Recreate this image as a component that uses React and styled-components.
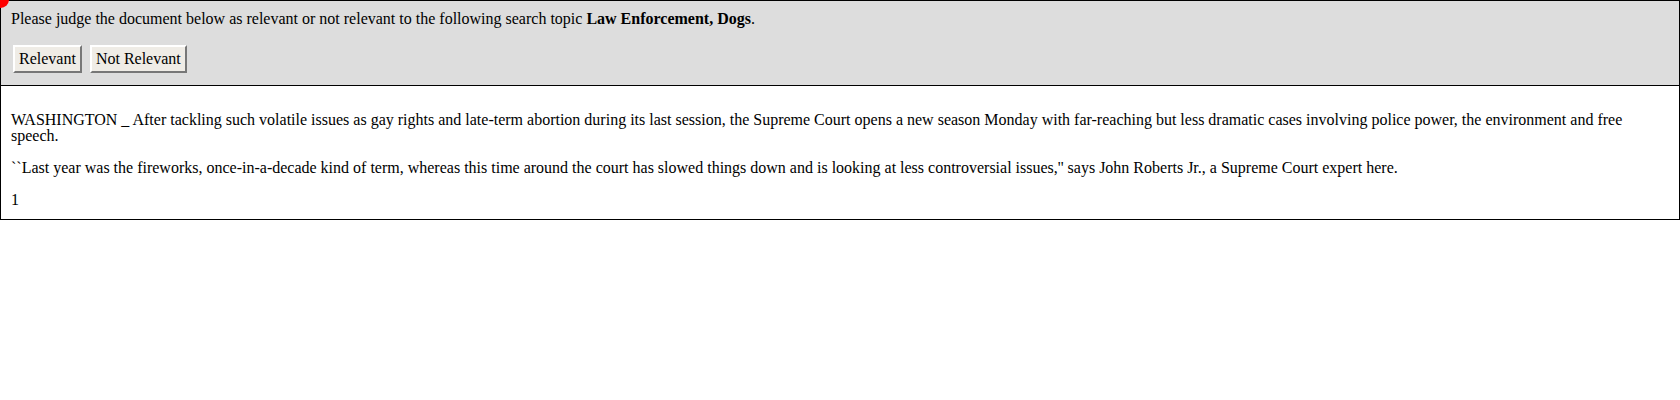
import React from 'react';
import styled, { createGlobalStyle } from 'styled-components';

const GlobalStyle = createGlobalStyle`
  body {
    margin: 0;
    background: #ffffff;
    font-family: "Liberation Serif", "Times New Roman", serif;
    font-size: 16px;
    color: #000;
  }
`;

const Page = styled.div`
  position: relative;
`;

const Marker = styled.span`
  position: absolute;
  top: -9px;
  left: -8px;
  width: 17px;
  height: 17px;
  border-radius: 50%;
  background: #ff0000;
`;

const Prompt = styled.div`
  background-color: #dddddd;
  border: 1px solid #000;
  padding: 9px 10px 12px 10px;
`;

const Question = styled.div`
  line-height: 18px;
  margin-bottom: 17px;
`;

const Buttons = styled.div`
  display: flex;
  gap: 8px;
  padding-left: 2px;
`;

const JudgeButton = styled.button`
  font-family: "Liberation Serif", "Times New Roman", serif;
  font-size: 16px;
  color: #000;
  height: 28px;
  padding: 0 4px;
  background-color: #efece6;
  border: 2px solid;
  border-color: #ffffff #777777 #777777 #ffffff;
  cursor: pointer;
`;

const Document = styled.div`
  border: 1px solid #000;
  border-top: none;
  padding: 10px 10px 11px 10px;
`;

const Para = styled.p`
  margin: 16px 0;
  line-height: 16px;

  &:last-child {
    margin-bottom: 0;
  }
`;

export default function App() {
  return (
    <Page>
      <GlobalStyle />
      <Marker />
      <Prompt>
        <Question>
          Please judge the document below as relevant or not relevant to the following search topic{' '}
          <b>Law Enforcement, Dogs</b>.
        </Question>
        <Buttons>
          <JudgeButton>Relevant</JudgeButton>
          <JudgeButton>Not Relevant</JudgeButton>
        </Buttons>
      </Prompt>
      <Document>
        <Para>
          WASHINGTON _ After tackling such volatile issues as gay rights and late-term abortion during its last session, the Supreme Court opens a new season Monday with far-reaching but less dramatic cases involving police power, the environment and free speech.
        </Para>
        <Para>
          ``Last year was the fireworks, once-in-a-decade kind of term, whereas this time around the court has slowed things down and is looking at less controversial issues,'' says John Roberts Jr., a Supreme Court expert here.
        </Para>
        <Para>1</Para>
      </Document>
    </Page>
  );
}
